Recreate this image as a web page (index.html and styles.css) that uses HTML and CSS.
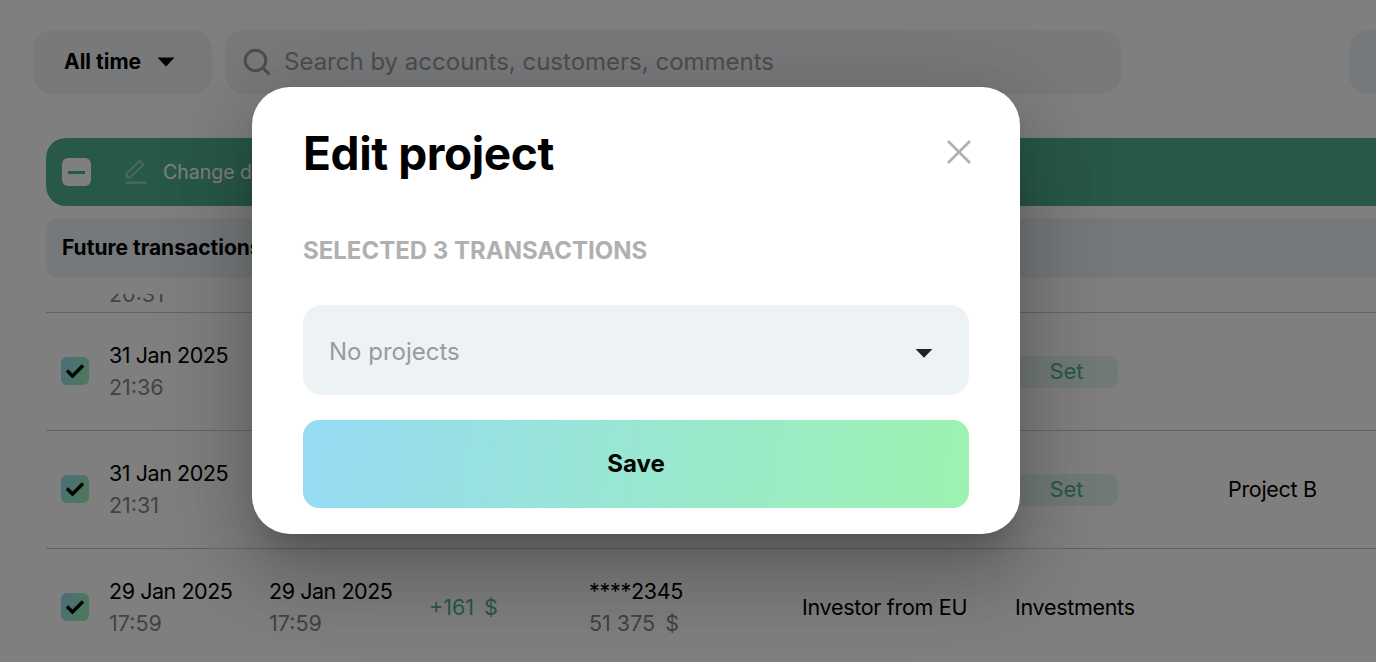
FILE: index.html
```
<!DOCTYPE html>
<html lang="en">
<head>
    <meta charset="UTF-8">
    <meta name="viewport" content="width=device-width, initial-scale=1.0">
    <title>Transactions</title>
    <link rel="stylesheet" href="styles.css">
</head>
<body>
    <div class="page">
        <div class="filters">
            <button class="period">
                All time
                <svg width="18" height="10" viewBox="0 0 18 10"><path d="M0.5 0.5h17L9 9.5z"/></svg>
            </button>
            <div class="search">
                <svg width="28" height="28" viewBox="0 0 28 28" fill="none" stroke="#9a9a9a" stroke-width="3">
                    <circle cx="12.5" cy="12.5" r="10.3"/>
                    <path d="M19.5 19.5l7 7"/>
                </svg>
                <span>Search by accounts, customers, comments</span>
            </div>
            <div class="filter-extra"></div>
        </div>

        <div class="actions">
            <span class="check-all"></span>
            <svg class="pencil" width="22" height="26" viewBox="0 0 22 26" fill="none" stroke="#fff" stroke-width="1.9">
                <path d="M1.5 18.5v-4L14.8 1.8l3.6 3.8L5 18.5z"/>
                <path d="M1 23.7h20" stroke-width="2.4"/>
            </svg>
            <span class="action-text">Change date</span>
        </div>

        <div class="group">Future transactions</div>

        <div class="list">
            <div class="row-cut">
                <div class="muted">20:31</div>
            </div>
            <div class="row">
                <div class="checkbox"><svg width="20" height="16" viewBox="0 0 20 16"><path d="M2 7.5l5.5 5.5L18 2.5"/></svg></div>
                <div class="date">31 Jan 2025<br><span class="muted">21:36</span></div>
                <div class="category"><button class="set">Set</button></div>
            </div>
            <div class="row">
                <div class="checkbox"><svg width="20" height="16" viewBox="0 0 20 16"><path d="M2 7.5l5.5 5.5L18 2.5"/></svg></div>
                <div class="date">31 Jan 2025<br><span class="muted">21:31</span></div>
                <div class="category"><button class="set">Set</button></div>
                <div class="project">Project B</div>
            </div>
            <div class="row">
                <div class="checkbox"><svg width="20" height="16" viewBox="0 0 20 16"><path d="M2 7.5l5.5 5.5L18 2.5"/></svg></div>
                <div class="date">29 Jan 2025<br><span class="muted">17:59</span></div>
                <div class="date">29 Jan 2025<br><span class="muted">17:59</span></div>
                <div class="amount">+161 <span class="currency">$</span></div>
                <div>****2345<br><span class="muted">51 375 <span class="currency">$</span></span></div>
                <div>Investor from EU</div>
                <div>Investments</div>
            </div>
        </div>
    </div>

    <div class="overlay">
        <div class="modal">
            <div class="modal-header">
                <h2>Edit project</h2>
                <button class="close">
                    <svg width="24" height="24" viewBox="0 0 24 24" fill="none" stroke="#b0b0b0" stroke-width="2.6"><path d="M1 1l22 22M23 1L1 23"/></svg>
                </button>
            </div>
            <p class="selected">SELECTED 3 TRANSACTIONS</p>
            <div class="select">
                <span>No projects</span>
                <svg width="18" height="9" viewBox="0 0 18 9"><path d="M0.5 0h17L9 8.8z" fill="#212121"/></svg>
            </div>
            <button class="save">Save</button>
        </div>
    </div>
</body>
</html>
```
FILE: styles.css
```
* {
    box-sizing: border-box;
}

body {
    font-family: Inter, sans-serif;
    font-size: 21.5px;
    line-height: 32px;
    color: #000;
    background-color: #fff;
    margin: 0;
    height: 662px;
    overflow: hidden;
}

button {
    font-family: inherit;
    color: #000;
    border: none;
    cursor: pointer;
}

svg {
    flex-shrink: 0;
}

.page {
    height: 662px;
    padding-top: 30px;
    overflow: hidden;
}

.filters {
    display: flex;
    height: 64px;
    margin-left: 33px;
}

.period {
    display: flex;
    align-items: center;
    gap: 16px;
    width: 179px;
    padding: 0 0 1px 31px;
    border-radius: 20px;
    background-color: #f0f2f6;
    font-size: 21px;
    font-weight: 700;
}

.search {
    display: flex;
    align-items: center;
    gap: 13px;
    width: 896px;
    margin-left: 13px;
    padding: 0 0 1px 18px;
    border-radius: 20px;
    background-color: #f0f2f6;
    font-size: 24px;
    color: #9a9a9a;
}

.filter-extra {
    flex: 1;
    margin-left: 228px;
    border-radius: 20px 0 0 20px;
    background-color: #eaf3f6;
}

.actions {
    display: flex;
    align-items: center;
    height: 68px;
    margin: 44px 0 0 46px;
    padding-left: 16px;
    border-radius: 20px 0 0 20px;
    background-color: #50b090;
    color: #fff;
    font-size: 19.5px;
}

.check-all {
    display: flex;
    align-items: center;
    justify-content: center;
    width: 29px;
    height: 28px;
    border-radius: 6px;
    background-color: #fff;
}

.check-all::before {
    content: "";
    width: 17px;
    height: 3px;
    background-color: #50b090;
}

.pencil {
    margin-left: 34px;
    opacity: 0.4;
}

.action-text {
    margin-left: 16px;
}

.group {
    height: 60px;
    margin: 12px 0 0 46px;
    padding-left: 16px;
    border-radius: 12px 0 0 12px;
    background-color: #eaf3f6;
    font-size: 21px;
    font-weight: 700;
    line-height: 60px;
}

.list {
    margin: 16px 0 0 46px;
    width: 1450px;
}

.row {
    display: grid;
    grid-template-columns: 63px 160px 160px 160px repeat(4, 213px);
    align-items: center;
    height: 118px;
    padding-bottom: 2px;
    border-bottom: 1px solid #c8c8c8;
    letter-spacing: -0.3px;
}

/* row scrolled under the group header */
.row-cut {
    display: flex;
    align-items: flex-end;
    height: 19px;
    padding: 0 0 2px 63px;
    border-bottom: 1px solid #c8c8c8;
    overflow: hidden;
}

.date {
    letter-spacing: -0.45px;
}

.muted {
    color: #858585;
    letter-spacing: 0;
}

.checkbox {
    display: flex;
    align-items: center;
    justify-content: center;
    width: 28px;
    height: 28px;
    margin-left: 15px;
    border-radius: 6px;
    background: linear-gradient(110deg, #96dbf4, #9df3b0);
}

.checkbox path {
    fill: none;
    stroke: #000;
    stroke-width: 3.4;
}

.category {
    grid-column: 7;
}

.set {
    display: block;
    width: 103px;
    height: 32px;
    margin-top: 2px;
    padding: 0 0 1px;
    border-radius: 9px;
    background-color: #e5f4ef;
    color: #50b090;
    font-size: 22px;
}

.project {
    grid-column: 8;
}

.amount {
    color: #50b090;
    letter-spacing: 0;
}

.currency {
    margin-left: 4px;
}

.overlay {
    position: absolute;
    top: 0;
    left: 0;
    width: 1376px;
    height: 662px;
    padding: 87px 0 0 252px;
    background-color: rgba(0, 0, 0, 0.5);
    overflow: hidden;
}

.modal {
    width: 768px;
    height: 447px;
    padding: 38px 51px 0;
    border-radius: 38px;
    background-color: #fff;
    box-shadow: 0 22px 30px -14px rgba(0, 0, 0, 0.2),
                0 48px 76px 6px rgba(0, 0, 0, 0.14),
                0 18px 92px 16px rgba(0, 0, 0, 0.12);
}

.modal-header {
    display: flex;
    align-items: center;
    justify-content: space-between;
    height: 56px;
}

.modal-header h2 {
    margin: 0;
    font-size: 46px;
    line-height: 56px;
    letter-spacing: -0.4px;
}

.close {
    display: flex;
    margin: 0 -2px 2px 0;
    padding: 0;
    background: none;
}

.selected {
    margin: 54px 0 0;
    color: #b0b0b0;
    font-size: 24px;
    font-weight: 700;
}

.select {
    display: flex;
    align-items: center;
    justify-content: space-between;
    height: 90px;
    margin-top: 38px;
    padding: 4px 36px 0 26px;
    border-radius: 19px;
    background-color: #edf2f5;
    color: #9a9a9a;
    font-size: 24px;
}

.select svg {
    margin-top: 3px;
}

.save {
    width: 100%;
    height: 88px;
    margin-top: 25px;
    padding-bottom: 3px;
    border-radius: 16px;
    background: linear-gradient(98deg, #95dbf4, #9cf3b0);
    font-size: 24px;
    font-weight: 700;
}
```
